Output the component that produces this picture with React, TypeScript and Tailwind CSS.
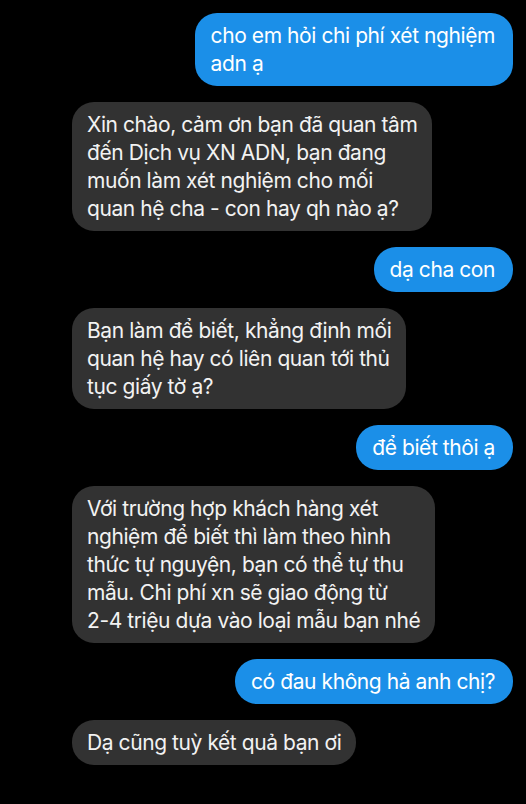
const messages: { from: "me" | "them"; text: string }[] = [
  { from: "me", text: "cho em hỏi chi phí xét nghiệm\nadn ạ" },
  {
    from: "them",
    text: "Xin chào, cảm ơn bạn đã quan tâm\nđến Dịch vụ XN ADN, bạn đang\nmuốn làm xét nghiệm cho mối\nquan hệ cha - con hay qh nào ạ?",
  },
  { from: "me", text: "dạ cha con" },
  {
    from: "them",
    text: "Bạn làm để biết, khẳng định mối\nquan hệ hay có liên quan tới thủ\ntục giấy tờ ạ?",
  },
  { from: "me", text: "để biết thôi ạ" },
  {
    from: "them",
    text: "Với trường hợp khách hàng xét\nnghiệm để biết thì làm theo hình\nthức tự nguyện, bạn có thể tự thu\nmẫu. Chi phí xn sẽ giao động từ\n2-4 triệu dựa vào loại mẫu bạn nhé",
  },
  { from: "me", text: "có đau không hả anh chị?" },
  { from: "them", text: "Dạ cũng tuỳ kết quả bạn ơi" },
]

export default function App() {
  return (
    <div
      className="w-[526px] h-[804px] bg-black overflow-hidden pt-[13px] pr-[13px] pl-[72px] flex flex-col gap-4 antialiased"
      style={{ fontFamily: "Inter, 'Noto Sans', sans-serif" }}
    >
      {messages.map((m, i) =>
        m.from === "me" ? (
          <div key={i} className="flex justify-end">
            <div className="whitespace-pre-line rounded-[22px] bg-[#1b8fe8] pl-[16px] pr-[18px] py-[8.5px] text-[21px] leading-[28px] tracking-[-0.02em] text-white">
              {m.text}
            </div>
          </div>
        ) : (
          <div key={i} className="flex justify-start">
            <div className="whitespace-pre-line rounded-[22px] bg-[#323232] px-[15px] py-[8.5px] text-[21px] leading-[28px] tracking-[-0.02em] text-[#f2f2f2]">
              {m.text}
            </div>
          </div>
        )
      )}
    </div>
  )
}
